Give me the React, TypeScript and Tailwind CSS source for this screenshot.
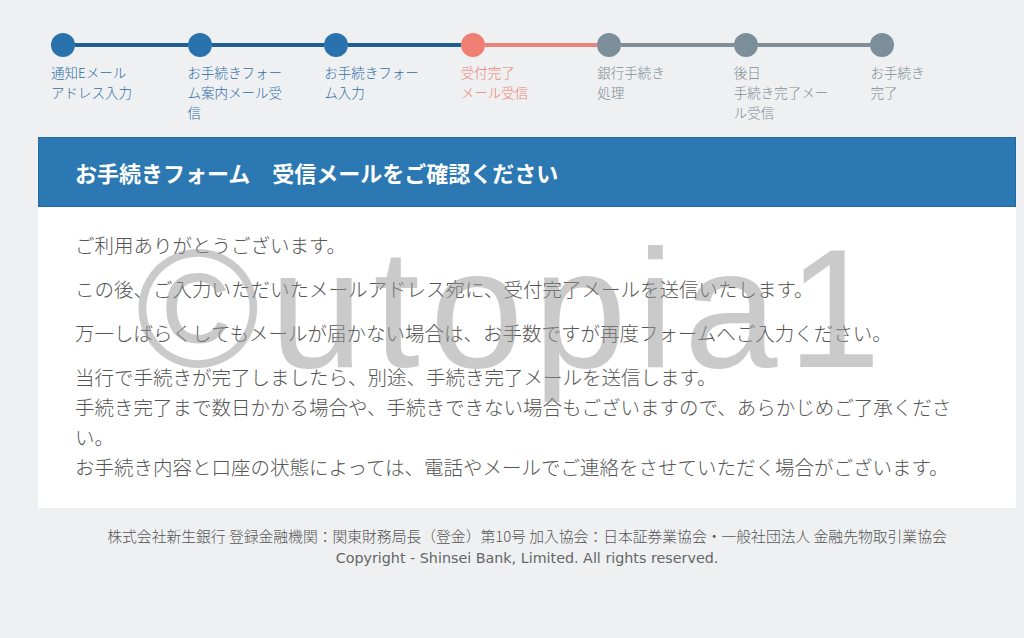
import React from "react";

type Tone = "done" | "current" | "todo";

const steps: { lines: string[]; tone: Tone; line?: Tone }[] = [
  { lines: ["通知Eメール", "アドレス入力"], tone: "done", line: "done" },
  { lines: ["お手続きフォーム案内メール受信"], tone: "done", line: "done" },
  { lines: ["お手続きフォーム入力"], tone: "done", line: "done" },
  { lines: ["受付完了", "メール受信"], tone: "current", line: "current" },
  { lines: ["銀行手続き", "処理"], tone: "todo", line: "todo" },
  { lines: ["後日", "手続き完了メール受信"], tone: "todo", line: "todo" },
  { lines: ["お手続き", "完了"], tone: "todo" },
];

const dotColor: Record<Tone, string> = {
  done: "bg-[#2a72ad]",
  current: "bg-[#f07f73]",
  todo: "bg-[#7b8e9a]",
};

const lineColor: Record<Tone, string> = {
  done: "bg-[#1f5f91]",
  current: "bg-[#ea837a]",
  todo: "bg-[#808d96]",
};

const textColor: Record<Tone, string> = {
  done: "text-[#2f6ea6]",
  current: "text-[#ee7c6f]",
  todo: "text-[#7e8b94]",
};

const font = { fontFamily: '"Noto Sans CJK JP", "Noto Sans", sans-serif' };

export default function App() {
  return (
    <div className="min-h-[638px] w-[1024px] overflow-hidden bg-[#eef0f2] font-light" style={font}>
      <div className="ml-[38px] w-[978px]">
        {/* Progress steps */}
        <ol className="ml-[13px] grid w-[956px] grid-cols-7 pt-[33px]">
          {steps.map((s, i) => (
            <li key={i} className="flex flex-col">
              <div className="flex items-center">
                <span className={`h-[24px] w-[24px] shrink-0 rounded-full ${dotColor[s.tone]}`} />
                {s.line && <span className={`h-[4px] flex-1 ${lineColor[s.line]}`} />}
              </div>
              <div className={`mt-[5px] w-[100px] text-[13.5px] leading-[20px] ${textColor[s.tone]}`}>
                {s.lines.map((l, j) => (
                  <div key={j}>{l}</div>
                ))}
              </div>
            </li>
          ))}
        </ol>

        {/* Main panel */}
        <section className="mt-[15px]">
          <h1 className="flex h-[70px] items-center border border-[#2468a0] bg-[#2b78b2] pl-[36px] text-[22px] font-bold text-white">
            お手続きフォーム　受信メールをご確認ください
          </h1>
          <div className="relative bg-white pb-[26px] pl-[37px] pr-[56px] pt-[23px] text-[19.5px] leading-[30px] text-[#555]">
            <p>ご利用ありがとうございます。</p>
            <p className="mt-[14px]">この後、ご入力いただいたメールアドレス宛に、受付完了メールを送信いたします。</p>
            <p className="mt-[14px]">万一しばらくしてもメールが届かない場合は、お手数ですが再度フォームへご入力ください。</p>
            <p className="mt-[14px]">
              当行で手続きが完了しましたら、別途、手続き完了メールを送信します。
              <br />
              手続き完了まで数日かかる場合や、手続きできない場合もございますので、あらかじめご了承ください。
              <br />
              お手続き内容と口座の状態によっては、電話やメールでご連絡をさせていただく場合がございます。
            </p>

            {/* watermark */}
            <div
              className="pointer-events-none absolute left-[98px] top-[18px] select-none whitespace-nowrap text-[168px] font-normal leading-none tracking-[10px] text-[rgba(150,150,150,0.5)]"
              style={{ fontFamily: '"Liberation Sans", Arial, sans-serif' }}
            >
              ©utopia1
            </div>
          </div>
        </section>

        {/* Footer */}
        <footer className="mt-[16px] text-center leading-[23px]">
          <p className="text-[14.8px] text-[#555]">
            株式会社新生銀行 登録金融機関：関東財務局長（登金）第10号 加入協会：日本証券業協会・一般社団法人 金融先物取引業協会
          </p>
          <p
            className="text-[14.3px] font-normal text-[#666]"
            style={{ fontFamily: '"DejaVu Sans", "Noto Sans CJK JP", sans-serif' }}
          >
            Copyright - Shinsei Bank, Limited. All rights reserved.
          </p>
        </footer>
      </div>
    </div>
  );
}
